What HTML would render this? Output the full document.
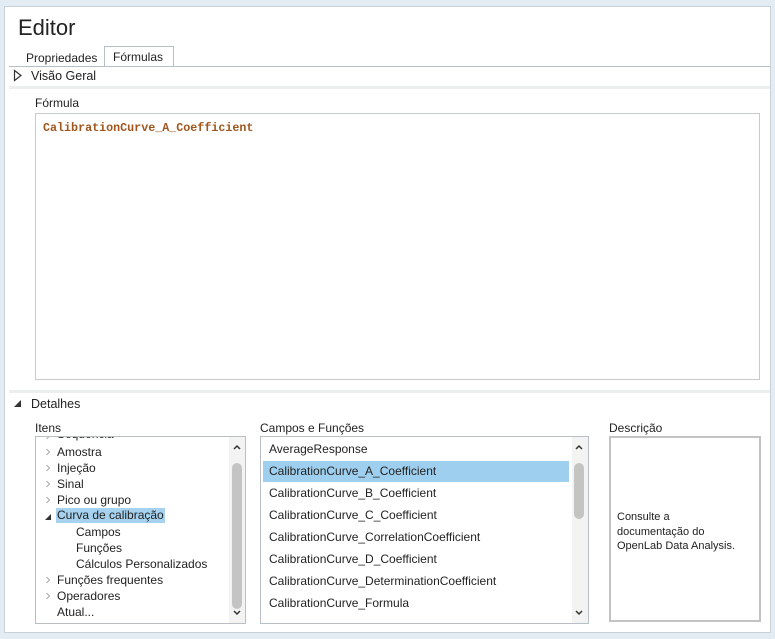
<!DOCTYPE html><html><head><meta charset="utf-8"><style>
body{margin:0;width:775px;height:639px;background:#e3ebf3;font-family:"Liberation Sans",sans-serif;font-size:12px;color:#222;position:relative;overflow:hidden}
.a{position:absolute;white-space:nowrap}
.panel{position:absolute;left:4px;top:6px;width:765px;height:625px;background:#fff;border:1px solid #c9d0d8}
</style></head><body>
<div class="panel"></div>
<div class="a" style="left:18px;top:15px;font-size:22px;color:#222">Editor</div>
<div class="a" style="left:104px;top:46px;width:68px;height:20px;border:1px solid #b8bec6;border-bottom:none;background:#fff"></div>
<div class="a" style="left:26px;top:51px">Propriedades</div>
<div class="a" style="left:113px;top:50px">Fórmulas</div>
<div class="a" style="left:9px;top:66px;width:761px;height:1px;background:#b8bec6"></div>
<svg class="a" style="left:13px;top:69px" width="10" height="13"><path d="M1.5 1.5 L8 6.5 L1.5 11.5Z" fill="none" stroke="#333" stroke-width="1.2"/></svg>
<div class="a" style="left:31px;top:69px;font-size:12.5px">Visão Geral</div>
<div class="a" style="left:9px;top:86px;width:761px;height:3px;background:#eceef0"></div>
<div class="a" style="left:35px;top:96px">Fórmula</div>
<div class="a" style="left:35px;top:113px;width:723px;height:265px;border:1px solid #c7cbd0"></div>
<div class="a" style="left:43px;top:121px;font-family:'Liberation Mono',monospace;font-weight:bold;font-size:11.7px;color:#a0561c">CalibrationCurve_A_Coefficient</div>
<div class="a" style="left:9px;top:390px;width:761px;height:3px;background:#eceef0"></div>
<svg class="a" style="left:13px;top:399px" width="10" height="10"><path d="M8 1 L8 8 L1 8Z" fill="#333"/></svg>
<div class="a" style="left:31px;top:397px;font-size:12.5px">Detalhes</div>
<div class="a" style="left:35px;top:421px">Itens</div>
<div class="a" style="left:260px;top:421px">Campos e Funções</div>
<div class="a" style="left:609px;top:421px">Descrição</div>
<div class="a" style="left:35px;top:436px;width:209px;height:186px;border:1px solid #b9bfc6;overflow:hidden">
 <div class="a" style="left:21px;top:-10px">Sequência</div>
 <div class="a" style="left:21px;top:8px">Amostra</div>
 <div class="a" style="left:21px;top:24px">Injeção</div>
 <div class="a" style="left:21px;top:40px">Sinal</div>
 <div class="a" style="left:21px;top:56px">Pico ou grupo</div>
 <div class="a" style="left:20px;top:71px;background:#a6d2ef;padding:0 1px;height:15px">Curva de calibração</div>
 <div class="a" style="left:40px;top:88px">Campos</div>
 <div class="a" style="left:40px;top:104px">Funções</div>
 <div class="a" style="left:40px;top:120px">Cálculos Personalizados</div>
 <div class="a" style="left:21px;top:136px">Funções frequentes</div>
 <div class="a" style="left:21px;top:152px">Operadores</div>
 <div class="a" style="left:21px;top:168px">Atual...</div>
 <svg class="a" style="left:9px;top:0" width="8" height="180"><g fill="none" stroke="#aaa"><path d="M1.5 -4l3 3-3 3M1.5 12l3 3-3 3M1.5 28l3 3-3 3M1.5 44l3 3-3 3M1.5 60l3 3-3 3M1.5 140l3 3-3 3M1.5 156l3 3-3 3"/></g><path d="M6 77v6h-6z" fill="#333"/></svg>
 <div class="a" style="left:193px;top:0;width:16px;height:186px;background:#f3f3f3"></div>
 <div class="a" style="left:196px;top:26px;width:10px;height:146px;background:#c4c4c4;border-radius:5px"></div>
 <svg class="a" style="left:196px;top:6px" width="10" height="8"><path d="M2 6l3-3 3 3" fill="none" stroke="#333" stroke-width="1.5"/></svg>
 <svg class="a" style="left:196px;top:172px" width="10" height="8"><path d="M2 2l3 3 3-3" fill="none" stroke="#333" stroke-width="1.5"/></svg>
</div>
<div class="a" style="left:260px;top:436px;width:327px;height:186px;border:1px solid #b9bfc6;overflow:hidden">
 <div class="a" style="left:2px;top:24px;width:306px;height:21px;background:#9fcfee"></div>
 <div class="a" style="left:8px;top:5px">AverageResponse</div>
 <div class="a" style="left:8px;top:27px">CalibrationCurve_A_Coefficient</div>
 <div class="a" style="left:8px;top:49px">CalibrationCurve_B_Coefficient</div>
 <div class="a" style="left:8px;top:71px">CalibrationCurve_C_Coefficient</div>
 <div class="a" style="left:8px;top:93px">CalibrationCurve_CorrelationCoefficient</div>
 <div class="a" style="left:8px;top:115px">CalibrationCurve_D_Coefficient</div>
 <div class="a" style="left:8px;top:137px">CalibrationCurve_DeterminationCoefficient</div>
 <div class="a" style="left:8px;top:159px">CalibrationCurve_Formula</div>
 <div class="a" style="left:311px;top:0;width:16px;height:186px;background:#f3f3f3"></div>
 <div class="a" style="left:313px;top:26px;width:10px;height:56px;background:#c4c4c4;border-radius:5px"></div>
 <svg class="a" style="left:313px;top:6px" width="10" height="8"><path d="M2 6l3-3 3 3" fill="none" stroke="#333" stroke-width="1.5"/></svg>
 <svg class="a" style="left:313px;top:172px" width="10" height="8"><path d="M2 2l3 3 3-3" fill="none" stroke="#333" stroke-width="1.5"/></svg>
</div>
<div class="a" style="left:609px;top:436px;width:148px;height:182px;border:2px solid #c3c3c3"></div>
<div class="a" style="left:617px;top:510px;font-size:11px;line-height:14.5px">Consulte a<br>documentação do<br>OpenLab Data Analysis.</div>
</body></html>
